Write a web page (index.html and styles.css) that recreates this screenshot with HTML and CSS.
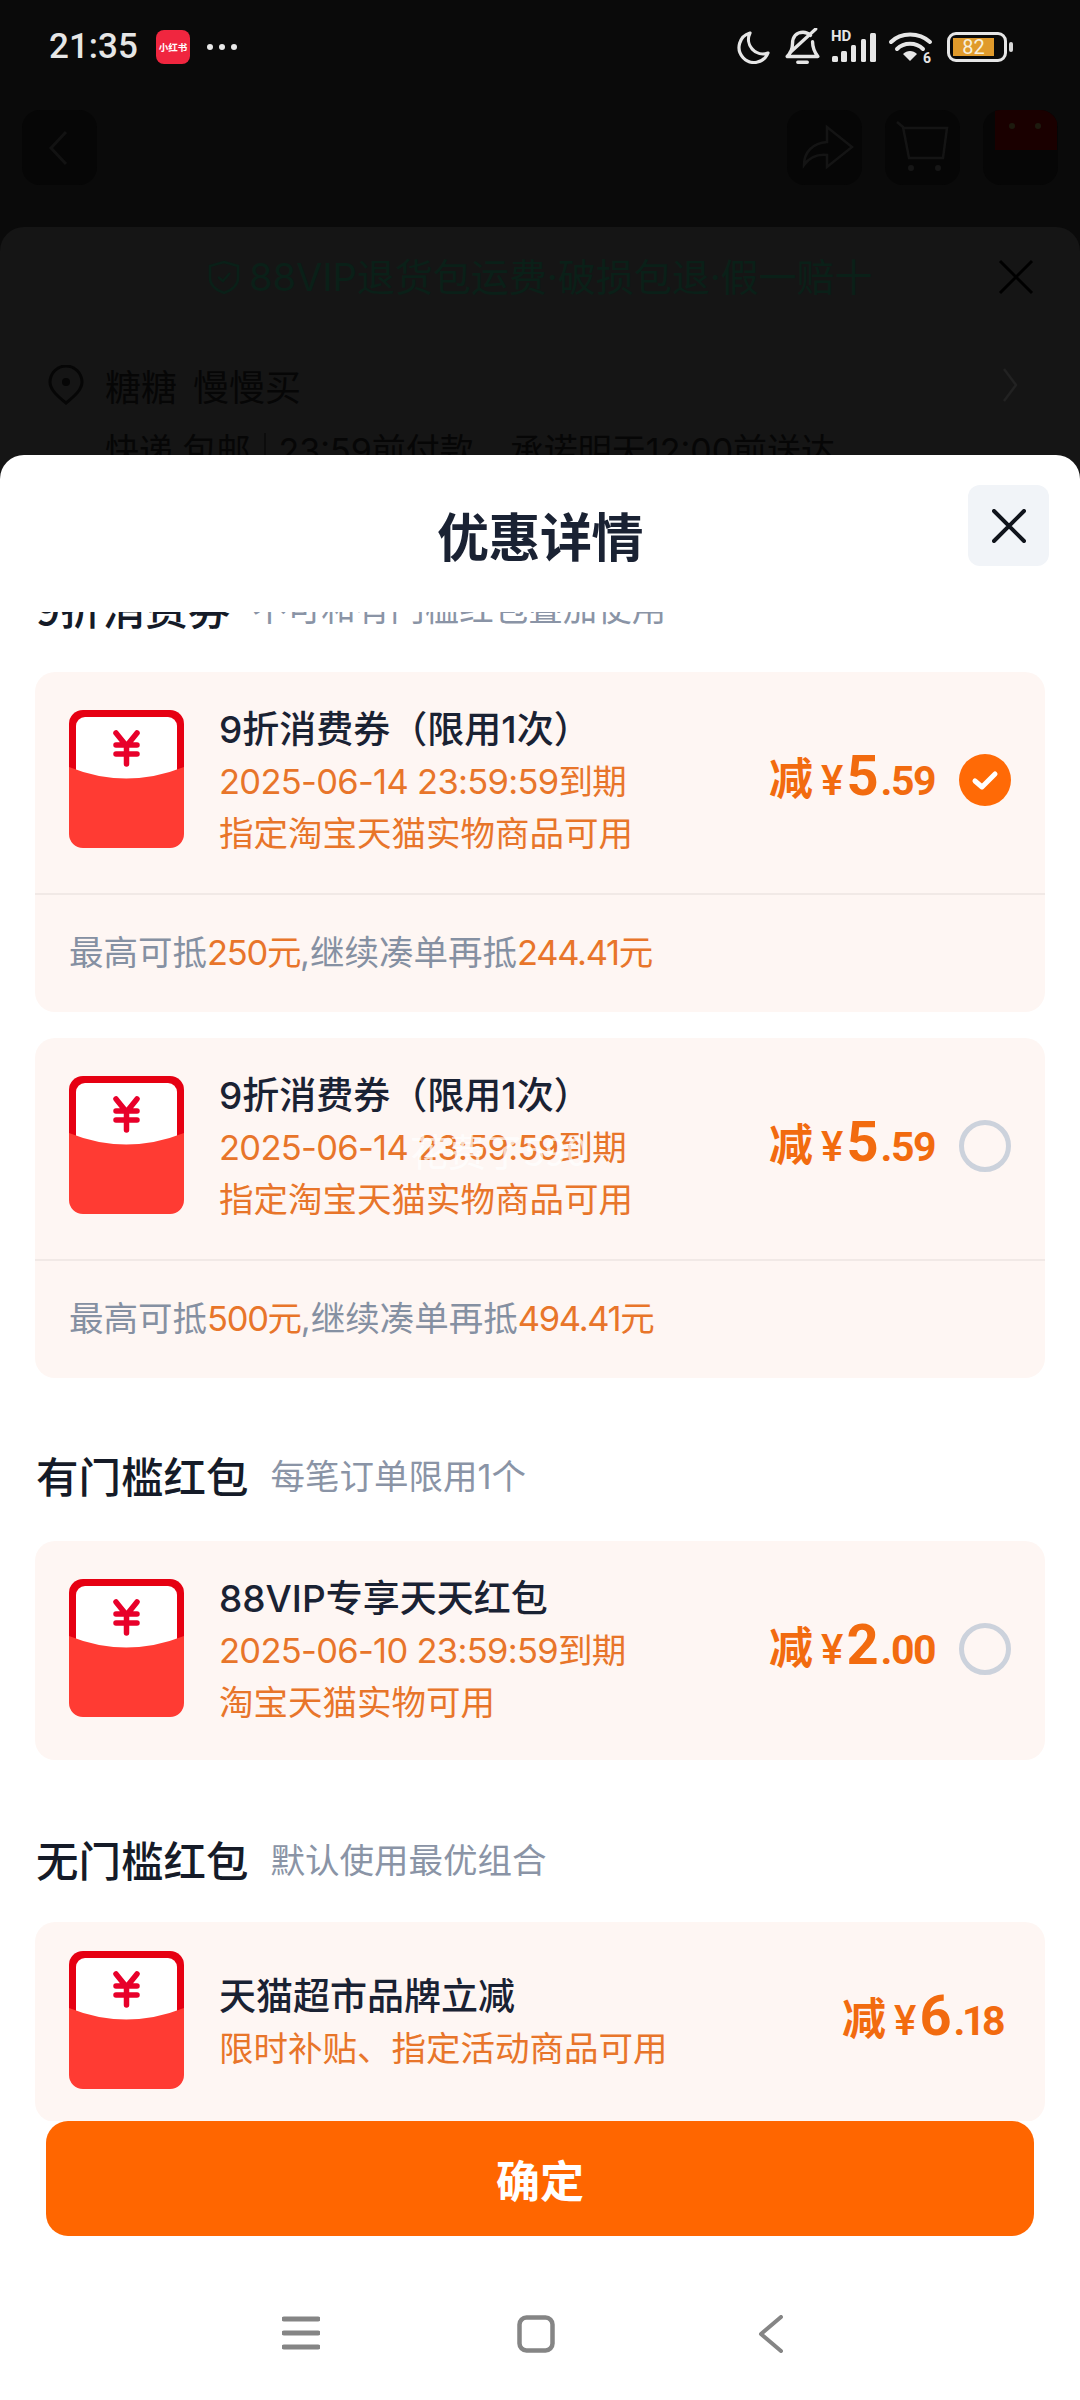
FILE: index.html
```html
<!DOCTYPE html>
<html lang="zh-CN">
<head>
<meta charset="utf-8">
<title>优惠详情</title>
<link rel="stylesheet" href="styles.css">
</head>
<body>
<svg class="sprite" aria-hidden="true">
  <symbol id="packet" viewBox="0 0 115 138">
    <rect width="115" height="100" rx="14" fill="#e60012"/>
    <rect x="7" y="7" width="101" height="80" rx="9" fill="#fff"/>
    <path d="M0 57Q57 80 115 57V124a14 14 0 0 1-14 14H14a14 14 0 0 1-14-14Z" fill="#ff3b33"/>
    <path d="M47 23 57.500 36 68 23M47 35H68M47 44H68M57.500 36V54" fill="none" stroke="#e8002a" stroke-width="5.500" stroke-linecap="round" stroke-linejoin="round"/>
  </symbol>
</svg>

<div class="phone">
  <header class="statusbar">
    <div class="status-left">
      <span class="clock">21:35</span>
      <span class="app-badge">小红书</span>
      <span class="status-dots"><i></i><i></i><i></i></span>
    </div>
    <div class="status-right">
      <svg class="ic-moon" viewBox="0 0 34 34"><path d="M13 3A15 15 0 1 0 31 23 14.500 14.500 0 0 1 13 3Z" fill="none" stroke="#e6e6e6" stroke-width="3.200" stroke-linejoin="round"/></svg>
      <svg class="ic-bell" viewBox="0 0 34 36"><path d="M3 27c3-3 5-6 5-12 0-7 4-11 10-11 3 0 5 1 7 3M27 13c0 6 2 10 5 14H3M13 32.500h9" fill="none" stroke="#e6e6e6" stroke-width="3.200" stroke-linecap="round" stroke-linejoin="round"/><path d="M6 23 30 1" stroke="#e6e6e6" stroke-width="3.200" stroke-linecap="round"/></svg>
      <div class="signal">
        <span class="signal-hd">HD</span>
        <svg class="ic-bars" viewBox="0 0 46 30"><g fill="#e6e6e6"><rect x="1" y="23" width="6" height="6" rx="1.500"/><rect x="10" y="18" width="6" height="11" rx="1.500"/><rect x="20" y="12" width="5" height="17" rx="1.500"/><rect x="30" y="6" width="5" height="23" rx="1.500"/><rect x="39" y="0" width="6" height="29" rx="1.500"/></g></svg>
      </div>
      <svg class="ic-wifi" viewBox="0 0 44 33"><g fill="none" stroke="#e6e6e6" stroke-width="4" stroke-linecap="round"><path d="M2 11C12 1 30 1 41 11"/><path d="M8 18C15 11 27 11 34 18"/></g><path d="M14 23c4-4 10-4 14 0l-7 7Z" fill="#e6e6e6"/><text x="34" y="32" class="wifi-six">6</text></svg>
      <div class="battery"><span class="battery-shell"><span class="battery-fill">82</span></span><i class="battery-tip"></i></div>
    </div>
  </header>

  <nav class="topnav">
    <span class="nav-btn"><svg viewBox="0 0 75 75"><path d="M44 22 29 38 44 54" fill="none" stroke="#121212" stroke-width="3"/></svg></span>
    <div class="nav-actions">
      <span class="nav-btn"><svg viewBox="0 0 75 75"><path d="M17 55C17 42 26 33 40 32V17L65 37 40 57V45C30 44 22 48 17 55Z" fill="none" stroke="#141414" stroke-width="2.500"/></svg></span>
      <span class="nav-btn"><svg viewBox="0 0 75 75"><path d="M12 12 18 17 24 48H58L62 18H18" fill="none" stroke="#141414" stroke-width="2.500"/><circle cx="26" cy="58" r="3" fill="#161616"/><circle cx="53" cy="58" r="3" fill="#161616"/></svg></span>
      <span class="nav-btn"><svg viewBox="0 0 75 75"><rect x="12" y="0" width="62" height="40" fill="#1a0000"/><circle cx="29" cy="16" r="3" fill="#1d1a0e"/><circle cx="55" cy="16" r="3" fill="#1d1a0e"/></svg></span>
    </div>
  </nav>

  <section class="order">
    <div class="order-banner">
      <svg class="ic-shield" viewBox="0 0 32 34"><path d="M16 2 30 6V18C30 25 24 30 16 33 8 30 2 25 2 18V6Z" fill="none" stroke="#0a2018" stroke-width="2.500"/><path d="M10 17 15 21 22 13" fill="none" stroke="#0a2018" stroke-width="2.500"/></svg>
      <span class="banner-text">88VIP退货包运费·破损包退·假一赔十</span>
      <svg class="ic-order-close" viewBox="0 0 36 36"><path d="M2 2 34 34M34 2 2 34" stroke="#000" stroke-width="3"/></svg>
    </div>
    <div class="address">
      <svg class="ic-pin" viewBox="0 0 36 40"><path d="M18 38C8 30 2 24 2 17a16 16 0 0 1 32 0C34 24 28 30 18 38Z" fill="none" stroke="#060606" stroke-width="3"/><circle cx="18" cy="17" r="4" fill="#060606"/></svg>
      <span class="address-name">糖糖 慢慢买</span>
      <svg class="ic-chevron" viewBox="0 0 16 36"><path d="M2 2 14 18 2 34" fill="none" stroke="#222" stroke-width="2.500"/></svg>
    </div>
    <p class="delivery">快递 包邮<i class="delivery-rule"></i>23:59前付款<span class="delivery-promise">承诺明天12:00前送达</span></p>
  </section>

  <section class="sheet">
    <header class="sheet-head">
      <h1 class="sheet-title">优惠详情</h1>
      <button class="sheet-close" type="button" aria-label="关闭">
        <svg viewBox="0 0 34 34"><path d="M2 2 32 32M32 2 2 32" stroke="#10141c" stroke-width="4" stroke-linecap="round"/></svg>
      </button>
    </header>

    <div class="coupon-scroll">
      <div class="group-head group-head--first">
        <h2 class="group-title">9折消费券</h2>
        <span class="group-note">不可和有门槛红包叠加使用</span>
      </div>

      <article class="coupon">
        <div class="coupon-main">
          <svg class="packet"><use href="#packet"/></svg>
          <div class="coupon-text">
            <div class="coupon-name">9折消费券（限用1次）</div>
            <div class="coupon-info coupon-info--date">2025-06-14 23:59:59到期</div>
            <div class="coupon-info">指定淘宝天猫实物商品可用</div>
          </div>
          <div class="amount"><span class="amount-label">减</span><span class="amount-yen">¥</span><span class="amount-int">5</span><span class="amount-dec">.59</span></div>
          <span class="check check--on"><svg viewBox="0 0 52 52"><path d="M16 27 23 33 36 20" fill="none" stroke="#fff" stroke-width="5" stroke-linecap="round" stroke-linejoin="round"/></svg></span>
        </div>
        <p class="coupon-foot">最高可抵<em>250元</em>,继续凑单再抵<em>244.41元</em></p>
      </article>

      <article class="coupon">
        <div class="coupon-main">
          <svg class="packet"><use href="#packet"/></svg>
          <div class="coupon-text">
            <div class="coupon-name">9折消费券（限用1次）</div>
            <div class="coupon-info coupon-info--date">2025-06-14 23:59:59到期</div>
            <div class="coupon-info">指定淘宝天猫实物商品可用</div>
          </div>
          <div class="amount"><span class="amount-label">减</span><span class="amount-yen">¥</span><span class="amount-int">5</span><span class="amount-dec">.59</span></div>
          <span class="check"></span>
        </div>
        <p class="coupon-foot">最高可抵<em>500元</em>,继续凑单再抵<em>494.41元</em></p>
      </article>

      <div class="group-head">
        <h2 class="group-title">有门槛红包</h2>
        <span class="group-note">每笔订单限用1个</span>
      </div>

      <article class="coupon">
        <div class="coupon-main coupon-main--solo">
          <svg class="packet"><use href="#packet"/></svg>
          <div class="coupon-text">
            <div class="coupon-name">88VIP专享天天红包</div>
            <div class="coupon-info coupon-info--date">2025-06-10 23:59:59到期</div>
            <div class="coupon-info">淘宝天猫实物可用</div>
          </div>
          <div class="amount"><span class="amount-label">减</span><span class="amount-yen">¥</span><span class="amount-int">2</span><span class="amount-dec">.00</span></div>
          <span class="check"></span>
        </div>
      </article>

      <div class="group-head group-head--low">
        <h2 class="group-title">无门槛红包</h2>
        <span class="group-note">默认使用最优组合</span>
      </div>

      <article class="coupon">
        <div class="coupon-main coupon-main--short">
          <svg class="packet"><use href="#packet"/></svg>
          <div class="coupon-text coupon-text--wide">
            <div class="coupon-name">天猫超市品牌立减</div>
            <div class="coupon-info">限时补贴、指定活动商品可用</div>
          </div>
          <div class="amount"><span class="amount-label">减</span><span class="amount-yen">¥</span><span class="amount-int">6</span><span class="amount-dec">.18</span></div>
        </div>
      </article>
    </div>

    <button class="confirm" type="button">确定</button>

    <footer class="navbar">
      <span class="navbar-cell"><svg class="nav-menu" viewBox="0 0 38 36"><path d="M2 4H36M2 18H36M2 32H36" stroke="#858585" stroke-width="5" stroke-linecap="round"/></svg></span>
      <span class="navbar-cell"><svg class="nav-home" viewBox="0 0 38 38"><rect x="2.500" y="2.500" width="33" height="33" rx="7" fill="none" stroke="#858585" stroke-width="4.500"/></svg></span>
      <span class="navbar-cell"><svg class="nav-back" viewBox="0 0 26 38"><path d="M23 2 3 19 23 36" fill="none" stroke="#858585" stroke-width="4" stroke-linecap="round" stroke-linejoin="round"/></svg></span>
    </footer>
  </section>

  <span class="floating-tip">花费了590</span>
</div>
</body>
</html>
```

FILE: styles.css
```css
* { box-sizing: border-box; margin: 0; padding: 0; }

html, body { width: 1080px; height: 2400px; overflow: hidden; background: #0a0a0a; }

body {
  font-family: Inter, "Noto Sans CJK SC", sans-serif;
  color: #1a2233;
}

.sprite { display: none; }

.phone { position: relative; width: 1080px; height: 2400px; overflow: hidden; background: #0a0a0a; }

/* status bar */
.statusbar {
  height: 94px;
  display: flex;
  justify-content: space-between;
  align-items: center;
  padding: 0 67px 0 49px;
  color: #e6e6e6;
}
.status-left { display: flex; align-items: center; }
.clock { font-family: Roboto, sans-serif; font-size: 35px; font-weight: 500; line-height: 40px; width: 107px; }
.app-badge {
  width: 34px; height: 34px;
  border-radius: 8px;
  background: #f0263f;
  color: #fff;
  font-family: "Noto Sans CJK SC", sans-serif;
  font-size: 9.500px; font-weight: 700;
  line-height: 34px; text-align: center;
  white-space: nowrap;
}
.status-dots { display: flex; gap: 6px; margin-left: 17px; }
.status-dots i { width: 6px; height: 6px; border-radius: 50%; background: #e8e8e8; }

.status-right { display: flex; align-items: center; }
.ic-moon { width: 34px; height: 34px; }
.ic-bell { width: 36px; height: 38px; margin-left: 13px; }
.signal { position: relative; width: 46px; height: 30px; margin-left: 11px; margin-top: 2px; }
.signal-hd {
  position: absolute; left: 0; top: -4px;
  font-family: Roboto, sans-serif; font-size: 15px; font-weight: 700; line-height: 15px;
}
.ic-bars { width: 46px; height: 30px; display: block; }
.ic-wifi { width: 44px; height: 33px; margin-left: 12px; overflow: visible; }
.wifi-six { font-family: Roboto, sans-serif; font-size: 14px; font-weight: 700; fill: #e6e6e6; }
.battery { display: flex; align-items: center; margin-left: 14px; }
.battery-shell {
  width: 60px; height: 30px;
  border: 3px solid #e6e6e6;
  border-radius: 9px;
  padding: 3px;
  display: block;
}
.battery-fill {
  display: block; width: 41px; height: 18px;
  background: #e09a2b;
  color: #f7f0dd;
  font-family: Roboto, sans-serif; font-size: 20px; line-height: 18px;
  text-align: center;
}
.battery-tip { width: 4px; height: 10px; margin-left: 2px; border-radius: 2px; background: #d8d8d8; }

/* page behind the sheet */
.topnav {
  display: flex;
  justify-content: space-between;
  padding: 16px 22px 0;
  height: 133px;
}
.nav-actions { display: flex; gap: 23px; }
.nav-btn { width: 75px; height: 75px; border-radius: 18px; background: #060606; display: block; overflow: hidden; }
.nav-btn svg { width: 75px; height: 75px; display: block; }

.order {
  height: 400px;
  background: #151515;
  border-radius: 24px 24px 0 0;
  overflow: hidden;
}
.order-banner {
  position: relative;
  display: flex;
  align-items: center;
  height: 34px;
  margin-top: 33px;
  padding-left: 208px;
}
.ic-shield { width: 32px; height: 34px; flex: none; }
.banner-text { margin-left: 9px; font-size: 38px; line-height: 34px; color: #0a2018; white-space: nowrap; }
.ic-order-close { position: absolute; left: 998px; top: -1px; width: 36px; height: 36px; }
.address {
  display: flex;
  align-items: center;
  margin-top: 71px;
  height: 40px;
  padding: 0 62px 0 48px;
}
.ic-pin { width: 36px; height: 40px; }
.address-name { margin-left: 21px; font-family: "Noto Sans CJK SC", sans-serif; font-size: 36px; line-height: 40px; color: #060606; word-spacing: 8px; }
.ic-chevron { width: 16px; height: 36px; margin-left: auto; }
.delivery {
  margin-top: 24px;
  padding-left: 105px;
  font-size: 34px; line-height: 44px;
  color: #060606;
  white-space: nowrap;
  display: flex; align-items: center;
}
.delivery-rule { width: 2px; height: 36px; margin: 0 13px; background: #0c0c0c; }
.delivery-promise { margin-left: 36px; }

/* discount sheet */
.sheet {
  position: absolute;
  left: 0; right: 0; top: 455px; bottom: 0;
  background: #fff;
  border-radius: 24px 24px 0 0;
  display: flex;
  flex-direction: column;
}
.sheet-head {
  height: 157px;
  display: grid;
  grid-template-columns: 1fr auto 1fr;
  align-items: start;
  padding: 30px 31px 0;
  flex: none;
}
.sheet-title {
  grid-column: 2;
  font-family: "Noto Sans CJK SC", sans-serif;
  font-size: 52px; font-weight: 700; line-height: 100px;
  color: #1a2233;
  letter-spacing: -.5px;
}
.sheet-close {
  grid-column: 3;
  justify-self: end;
  width: 81px; height: 81px;
  border: 0; border-radius: 12px;
  background: #f1f4f8;
  display: flex; align-items: center; justify-content: center;
}
.sheet-close svg { width: 34px; height: 34px; }

.coupon-scroll { height: 1509px; flex: none; overflow: hidden; padding: 0 35px; }

.group-head { display: flex; align-items: center; height: 52px; margin: 71px 1px 40px; }
.group-head--first { margin-top: -31px; margin-bottom: 39px; }
.group-head--low { margin-top: 73px; margin-bottom: 37px; }
.group-title { font-family: "Noto Sans CJK SC", sans-serif; font-size: 42.500px; font-weight: 500; line-height: 52px; color: #151b28; }
.group-note { margin-left: 22px; margin-top: 3px; font-size: 34.500px; line-height: 52px; color: #8a94a6; }

.coupon { background: #fef6f3; border-radius: 20px; margin-bottom: 26px; }
.coupon-main {
  display: flex;
  align-items: flex-start;
  height: 221px;
  padding: 38px 34px 0;
}
.coupon-main--solo { height: 219px; }
.coupon-main--short { height: 200px; padding-top: 29px; }

.packet { width: 115px; height: 138px; flex: none; display: block; }

.coupon-text { margin-left: 35px; margin-top: -6px; flex: 1; min-width: 0; }
.coupon-text--wide { margin-top: 20px; }
.coupon-name { font-size: 37px; font-weight: 500; line-height: 52px; color: #1a2233; white-space: nowrap; }
.coupon-info { font-size: 34.500px; line-height: 52px; color: #e8752a; white-space: nowrap; }
.coupon-info--date { letter-spacing: -.7px; }

.amount {
  display: flex;
  align-items: baseline;
  flex: none;
  margin-top: 36px;
  color: #f26b0f;
  font-family: Roboto, "Noto Sans CJK SC", sans-serif;
  font-weight: 700;
  line-height: 60px;
}
.coupon-main--short .amount { margin-top: 35px; margin-right: 9px; }
.coupon-main--short .amount-dec { letter-spacing: -3.500px; }
.amount-label { font-family: "Noto Sans CJK SC", sans-serif; font-size: 44px; margin-right: 8px; }
.amount-yen { font-size: 42px; margin-right: 3px; font-weight: 500; }
.amount-int { font-size: 56px; margin-right: 2px; }
.amount-dec { font-size: 41px; letter-spacing: -1.500px; }

.check {
  flex: none;
  width: 52px; height: 52px;
  margin: 44px 0 0 24px;
  border-radius: 50%;
  border: 5px solid #ccd2dc;
}
.check--on { border: 0; background: #ff6a06; }
.check--on svg { width: 52px; height: 52px; display: block; }

.coupon-foot {
  height: 119px;
  padding-left: 34px;
  border-top: 2px solid #f1e9e6;
  font-size: 34.500px; line-height: 115px;
  color: #8590a2;
}
.coupon-foot em { font-style: normal; color: #e8752a; letter-spacing: -1.300px; }

.confirm {
  flex: none;
  width: 988px; height: 115px;
  margin: 0 46px;
  border: 0; border-radius: 22px;
  background: #ff6600;
  color: #fff;
  font-family: "Noto Sans CJK SC", sans-serif;
  font-size: 44px; font-weight: 700;
}

.navbar { flex: 1; display: flex; justify-content: center; padding: 0 8px 0 0; }
.navbar-cell { width: 235px; display: flex; justify-content: center; padding-top: 79px; }
.nav-menu { width: 38px; height: 36px; }
.nav-home { width: 38px; height: 38px; }
.nav-back { width: 26px; height: 38px; }

.floating-tip {
  position: absolute;
  left: 410px; top: 1128px;
  font-family: "Noto Sans CJK SC", sans-serif;
  font-size: 38px; line-height: 44px;
  color: rgba(255, 255, 255, .72);
  white-space: nowrap;
}
```
